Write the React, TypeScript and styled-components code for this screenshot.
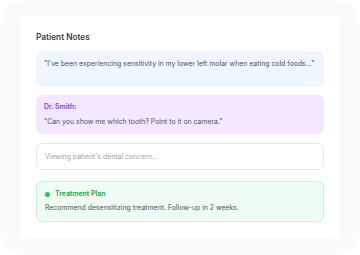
import React from "react";
import styled, { createGlobalStyle } from "styled-components";

const Global = createGlobalStyle`
  html, body { margin: 0; padding: 0; background: #ffffff; }
  body { font-family: Inter, "Noto Sans", "Liberation Sans", sans-serif; -webkit-font-smoothing: antialiased; }
  * { box-sizing: border-box; }
`;

const Panel = styled.div`
  width: 360px;
  height: 255px;
  background: #f8fafc;
  border-radius: 24px;
  padding: 16px 20px;
`;

const Card = styled.div`
  background: #ffffff;
  border-radius: 8px;
  padding: 16px;
  display: flex;
  flex-direction: column;
`;

const Title = styled.h2`
  margin: 0 0 9px;
  font-size: 8.3px;
  line-height: 10px;
  font-weight: 600;
  color: #374151;
`;

const Bubble = styled.div<{ $tone: "blue" | "purple"; $minH?: number }>`
  border-radius: 6px;
  padding: ${(p) => (p.$tone === "blue" ? "8px 8px" : "7px 8px")};
  min-height: ${(p) => (p.$minH ? `${p.$minH}px` : "auto")};
  background: ${(p) => (p.$tone === "blue" ? "#eff6ff" : "#f3e8ff")};
  display: flex;
  flex-direction: column;
  gap: 5px;
  margin-bottom: ${(p) => (p.$tone === "blue" ? "8px" : "9px")};
`;

const Speaker = styled.div`
  font-size: 6.9px;
  line-height: 10px;
  font-weight: 600;
  color: #9333ea;
`;

const Quote = styled.p`
  margin: 0;
  font-size: 6.9px;
  line-height: 10px;
  color: #4b5563;
  white-space: nowrap;
`;

const Field = styled.div`
  height: 27px;
  border: 1px solid #e5e7eb;
  border-radius: 6px;
  background: #ffffff;
  padding: 0 8px;
  display: flex;
  align-items: center;
  font-size: 6.9px;
  color: #9ca3af;
  margin-bottom: 11px;
`;

const Plan = styled.div`
  border: 1px solid #bbf7d0;
  background: #f0fdf4;
  border-radius: 6px;
  padding: 7px 8px 8px;
  display: flex;
  flex-direction: column;
  gap: 4px;
`;

const PlanHead = styled.div`
  display: flex;
  align-items: center;
  gap: 5px;
  font-size: 6.9px;
  line-height: 10px;
  font-weight: 600;
  color: #16a34a;
`;

const Dot = styled.span`
  width: 5px;
  height: 5px;
  border-radius: 50%;
  background: #22c55e;
  flex: none;
`;

export default function App() {
  return (
    <>
      <Global />
      <Panel>
        <Card>
          <Title>Patient Notes</Title>
          <Bubble $tone="blue" $minH={36}>
            <Quote>"I've been experiencing sensitivity in my lower left molar when eating cold foods..."</Quote>
          </Bubble>
          <Bubble $tone="purple">
            <Speaker>Dr. Smith:</Speaker>
            <Quote>"Can you show me which tooth? Point to it on camera."</Quote>
          </Bubble>
          <Field>Viewing patient's dental concern...</Field>
          <Plan>
            <PlanHead>
              <Dot />
              Treatment Plan
            </PlanHead>
            <Quote>Recommend desensitizing treatment. Follow-up in 2 weeks.</Quote>
          </Plan>
        </Card>
      </Panel>
    </>
  );
}
